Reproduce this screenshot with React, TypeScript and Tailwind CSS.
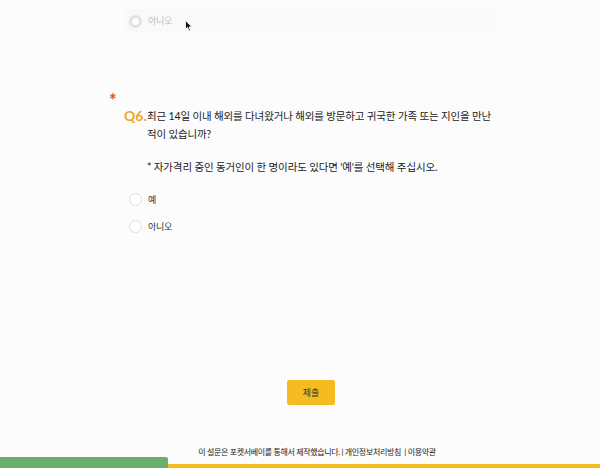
export default function App() {
  return (
    <div
      className="relative h-[468px] w-[600px] overflow-hidden bg-[#fcfcfc] text-[#222]"
      style={{ fontFamily: '"Lato", "Noto Sans CJK KR", sans-serif' }}
    >
      {/* 이전 질문 (흐림) */}
      <div className="ml-[125px] mt-[9px] flex h-[24px] w-[371px] items-center gap-[6px] bg-[#f5f5f5] pl-[4px] opacity-40">
        <span className="h-[13px] w-[13px] rounded-full border-[3px] border-[#bbb] bg-white" />
        <span className="text-[9px] tracking-[-0.3px] text-[#555]">아니오</span>
      </div>

      {/* 커서 */}
      <svg className="absolute left-[185px] top-[20px]" width="8" height="12" viewBox="0 0 8 12">
        <path d="M0.5 0.5 L0.5 9 L2.5 7.3 L4 11 L5.4 10.4 L4 6.9 L6.8 6.9 Z" fill="#111" stroke="#fff" strokeWidth="0.8" />
      </svg>

      {/* Q6 */}
      <div className="ml-[109px] mt-[56px]">
        <div className="h-[16px] text-[18px] font-bold leading-[22px] text-[#f04a25]">*</div>
        <div className="mt-[2px] flex">
          <div className="w-[38px] shrink-0 whitespace-nowrap pl-[15px] text-[14px] font-bold leading-[18px] text-[#f2a516]">Q6.</div>
          <div className="w-[346px] text-[10.5px] leading-[18px] tracking-[-0.15px] text-[#222]">
            <p>최근 14일 이내 해외를 다녀왔거나 해외를 방문하고 귀국한 가족 또는 지인을 만난 적이 있습니까?</p>
            <p className="mt-[15px]">* 자가격리 중인 동거인이 한 명이라도 있다면 '예'를 선택해 주십시오.</p>
          </div>
        </div>
        <div className="ml-[20px] mt-[17px] flex flex-col gap-[14px]">
          <label className="flex h-[13px] items-center gap-[6px]">
            <span className="h-[13px] w-[13px] rounded-full border border-[#ddd] bg-white" />
            <span className="text-[9px] tracking-[-0.3px] text-[#333]">예</span>
          </label>
          <label className="flex h-[13px] items-center gap-[6px]">
            <span className="h-[13px] w-[13px] rounded-full border border-[#ddd] bg-white" />
            <span className="text-[9px] tracking-[-0.3px] text-[#333]">아니오</span>
          </label>
        </div>
      </div>

      {/* 제출 */}
      <div className="mt-[147px] flex justify-center pl-[22px]">
        <button className="h-[25px] w-[48px] rounded-[2px] bg-[#f7bb22] text-[9px] text-[#333]">제출</button>
      </div>

      {/* 푸터 */}
      <div className="mt-[41px] flex justify-center pl-[34px] text-[8px] tracking-[-0.35px] text-[#222]">
        이 설문은 포켓서베이를 통해서 제작했습니다. | 개인정보처리방침 &nbsp;| 이용약관
      </div>

      {/* 진행바 */}
      <div className="absolute bottom-0 left-0 flex w-full items-end">
        <div className="h-[11px] w-[168px] rounded-tr-[2px] bg-[#6aad6c]" />
        <div className="h-[4px] flex-1 bg-[#f7bb22]" />
      </div>
    </div>
  );
}
